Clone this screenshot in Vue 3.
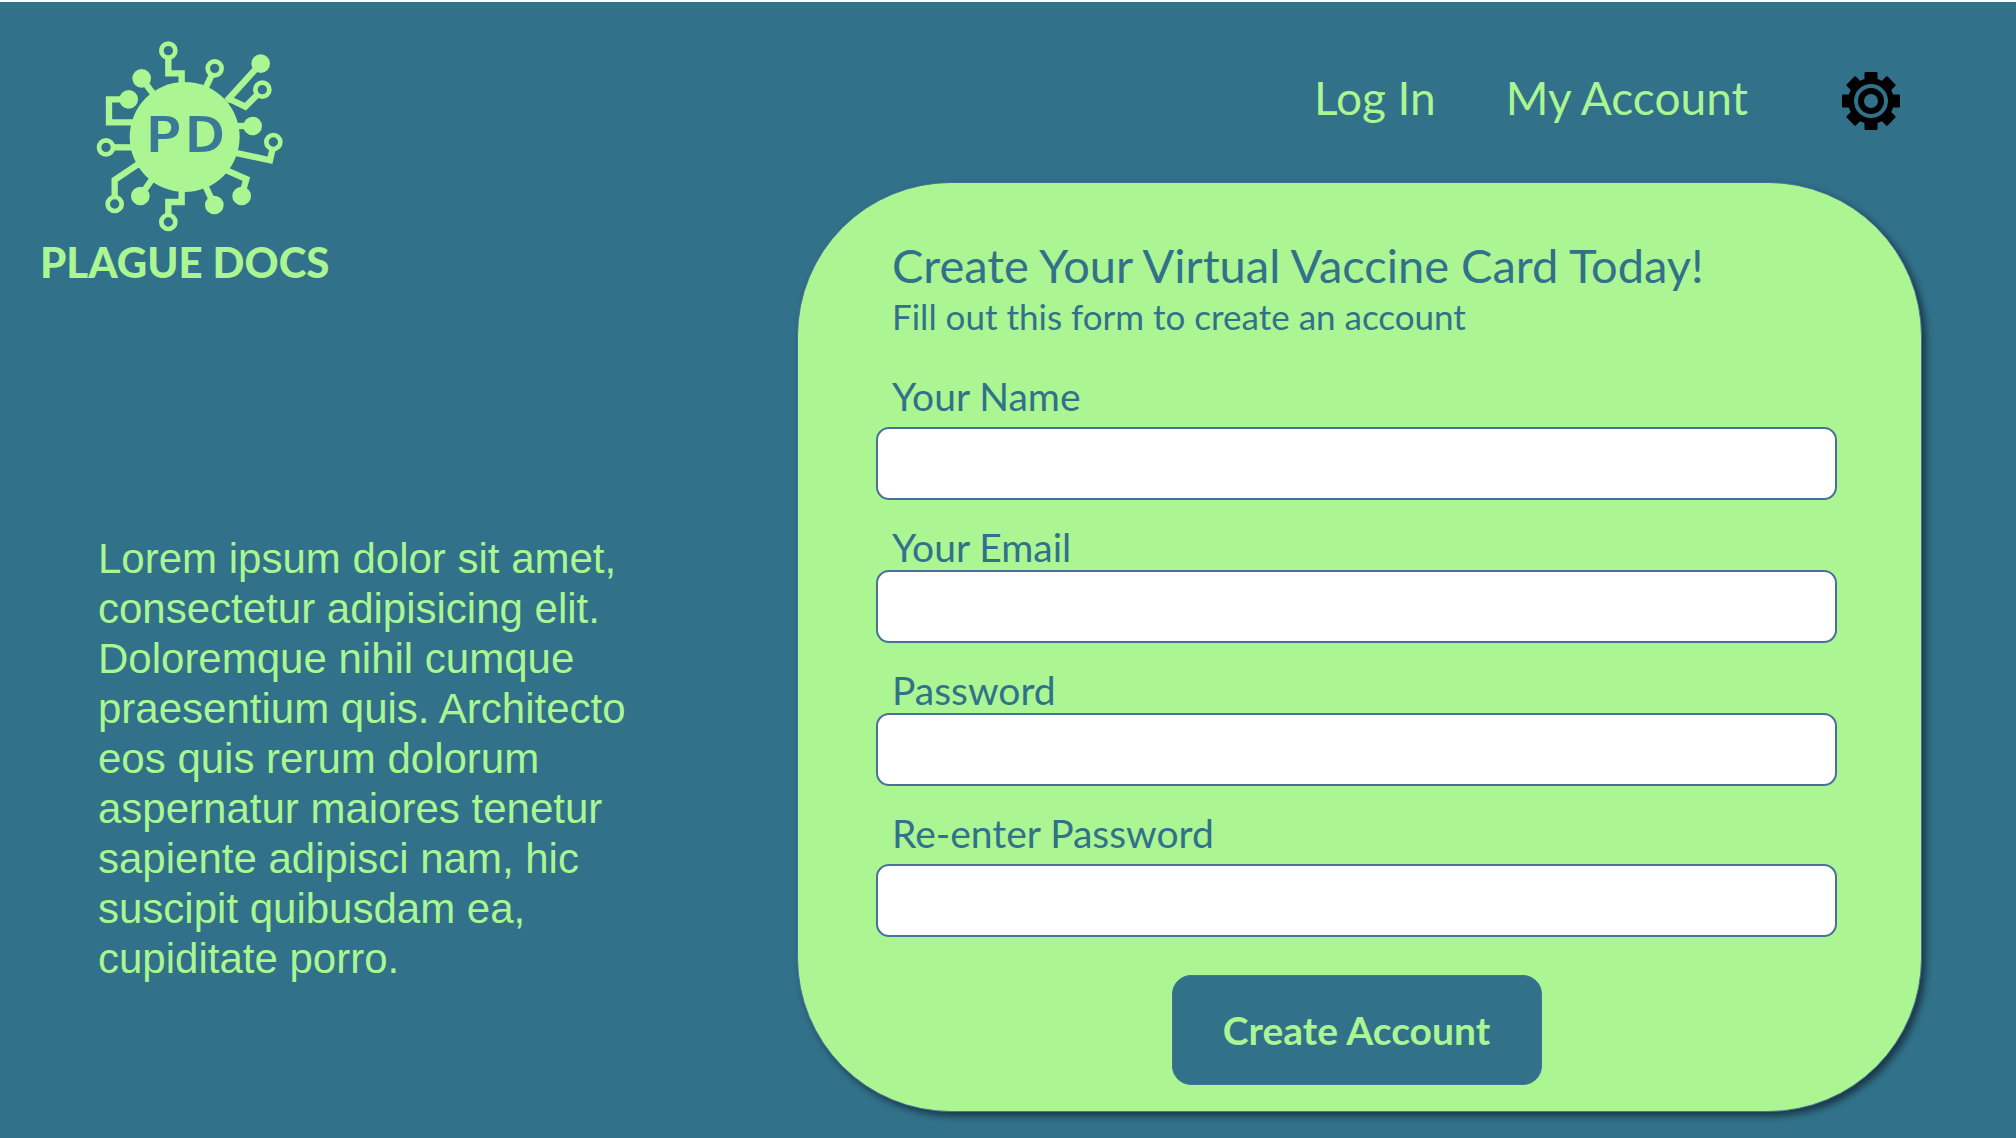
<script setup>
import { reactive } from 'vue'

const fields = [
  { id: 'name', label: 'Your Name', type: 'text' },
  { id: 'email', label: 'Your Email', type: 'email', snug: true },
  { id: 'password', label: 'Password', type: 'password', snug: true },
  { id: 'confirm', label: 'Re-enter Password', type: 'password' },
]
const form = reactive({ name: '', email: '', password: '', confirm: '' })
const teeth = [0, 45, 90, 135, 180, 225, 270, 315]
</script>

<template>
  <div class="page">
    <aside class="intro">
      <a class="brand" href="#">
        <svg class="emblem" viewBox="195 30 570 576" aria-hidden="true">
          <g class="traces">
            <path d="M415 86V130H455V165" />
            <path d="M545 135L526 176" />
            <path d="M692 101L590 213" />
            <path d="M592 204L646 230L681 195" />
            <path d="M668 288H615" />
            <path d="M727 360L720 391L610 367" />
            <path d="M637 490L649 447L585 419" />
            <path d="M553 525L527 470" />
            <path d="M415 552V516H455V480" />
            <path d="M331 498L366 448" />
            <path d="M254 498V450L328 400" />
            <path d="M250 352H310" />
            <path d="M296 208H237V277H310" />
            <path d="M335 145L370 192" />
          </g>
          <g class="rings">
            <circle cx="415" cy="62" r="21" />
            <circle cx="554" cy="115" r="21" />
            <circle cx="697" cy="179" r="21" />
            <circle cx="730" cy="336" r="21" />
            <circle cx="415" cy="576" r="21" />
            <circle cx="254" cy="522" r="21" />
            <circle cx="228" cy="352" r="21" />
          </g>
          <g class="dots">
            <circle cx="464" cy="321" r="165" />
            <circle cx="692" cy="101" r="28" />
            <circle cx="668" cy="288" r="28" />
            <circle cx="635" cy="498" r="28" />
            <circle cx="553" cy="525" r="28" />
            <circle cx="331" cy="498" r="28" />
            <circle cx="296" cy="208" r="28" />
            <circle cx="335" cy="145" r="28" />
          </g>
          <text class="monogram" x="345 461" y="369">PD</text>
        </svg>
        <span class="wordmark">PLAGUE DOCS</span>
      </a>
      <p class="blurb">
        Lorem ipsum dolor sit amet, consectetur adipisicing elit. Doloremque nihil cumque
        praesentium quis. Architecto eos quis rerum dolorum aspernatur maiores tenetur
        sapiente adipisci nam, hic suscipit quibusdam ea, cupiditate porro.
      </p>
    </aside>

    <main class="content">
      <nav class="nav">
        <a href="#">Log In</a>
        <a href="#">My Account</a>
        <button class="settings" type="button" aria-label="Settings">
          <svg viewBox="0 0 58 58" aria-hidden="true">
            <circle cx="29" cy="29" r="20" fill="none" stroke="#000" stroke-width="6" />
            <circle cx="29" cy="29" r="10" fill="none" stroke="#000" stroke-width="6" />
            <rect
              v-for="angle in teeth"
              :key="angle"
              x="22.5"
              y="0"
              width="13"
              height="10"
              rx="1"
              :transform="`rotate(${angle} 29 29)`"
            />
          </svg>
        </button>
      </nav>

      <form class="card" @submit.prevent>
        <h1>Create Your Virtual Vaccine Card Today!</h1>
        <p class="sub">Fill out this form to create an account</p>
        <div v-for="f in fields" :key="f.id" class="field" :class="{ snug: f.snug }">
          <label :for="f.id">{{ f.label }}</label>
          <input :id="f.id" v-model="form[f.id]" :type="f.type" />
        </div>
        <button class="submit" type="submit">Create Account</button>
      </form>
    </main>
  </div>
</template>

<style>
body {
  margin: 0;
  background: #31718a;
}
</style>

<style scoped>
.page {
  box-sizing: border-box;
  min-height: 100vh;
  display: grid;
  grid-template-columns: 757fr 1125fr;
  padding: 0 94px 24px 40px;
  border-top: 2px solid #fff;
  background: #31718a;
  color: #abf592;
  font-family: Lato, "Open Sans", sans-serif;
}
.brand {
  display: inline-flex;
  flex-direction: column;
  margin-top: 38px;
  color: inherit;
  text-decoration: none;
}
.emblem {
  width: 190px;
  height: 192px;
  margin-left: 55px;
}
.traces {
  fill: none;
  stroke: #abf592;
  stroke-width: 19;
}
.rings {
  fill: #31718a;
  stroke: #abf592;
  stroke-width: 14;
}
.dots {
  fill: #abf592;
}
.monogram {
  font-family: "DejaVu Sans", sans-serif;
  font-size: 152px;
  font-weight: 700;
  fill: #3b7a96;
  stroke: #abf592;
  stroke-width: 6;
}
.wordmark {
  margin-top: 8px;
  font-size: 42px;
  line-height: 44px;
  font-weight: 900;
}
.blurb {
  max-width: 560px;
  margin: 250px 0 0 58px;
  font-family: "Liberation Sans", Arial, sans-serif;
  font-size: 42px;
  line-height: 50px;
}
.nav {
  display: flex;
  justify-content: flex-end;
  align-items: center;
  gap: 70px;
  box-sizing: border-box;
  height: 180px;
  padding: 18px 22px 0 0;
}
.nav a {
  padding-bottom: 6px;
  color: inherit;
  font-size: 46px;
  line-height: 56px;
  text-decoration: none;
}
.settings {
  width: 58px;
  height: 58px;
  margin-left: 24px;
  padding: 0;
  border: 0;
  background: none;
}
.settings svg {
  display: block;
}
.card {
  display: flex;
  flex-direction: column;
  padding: 54px 84px 26px 78px;
  border: 1px solid #4a6f9c;
  border-radius: 154px;
  background: #abf592;
  box-shadow: 4px 4px 7px rgba(0, 0, 0, 0.5);
  color: #31718a;
}
h1 {
  margin: 0 16px;
  font-size: 47px;
  line-height: 56px;
  font-weight: 400;
}
.sub {
  margin: 0 16px 34px;
  font-size: 35px;
  line-height: 46px;
}
.field {
  display: flex;
  flex-direction: column;
  margin-bottom: 24px;
}
.field label {
  margin: 0 16px 8px;
  font-size: 39px;
  line-height: 46px;
}
.field.snug label {
  margin-bottom: 0;
}
.field input {
  box-sizing: border-box;
  width: 100%;
  height: 73px;
  padding: 0 16px;
  border: 2px solid #4a6f9c;
  border-radius: 13px;
  background: #fff;
  font: inherit;
  font-size: 39px;
}
.submit {
  align-self: center;
  width: 370px;
  height: 110px;
  margin-top: 14px;
  border: 1px solid #4a6f9c;
  border-radius: 19px;
  background: #31718a;
  color: #abf592;
  font: inherit;
  font-size: 39px;
  font-weight: 700;
}
</style>
